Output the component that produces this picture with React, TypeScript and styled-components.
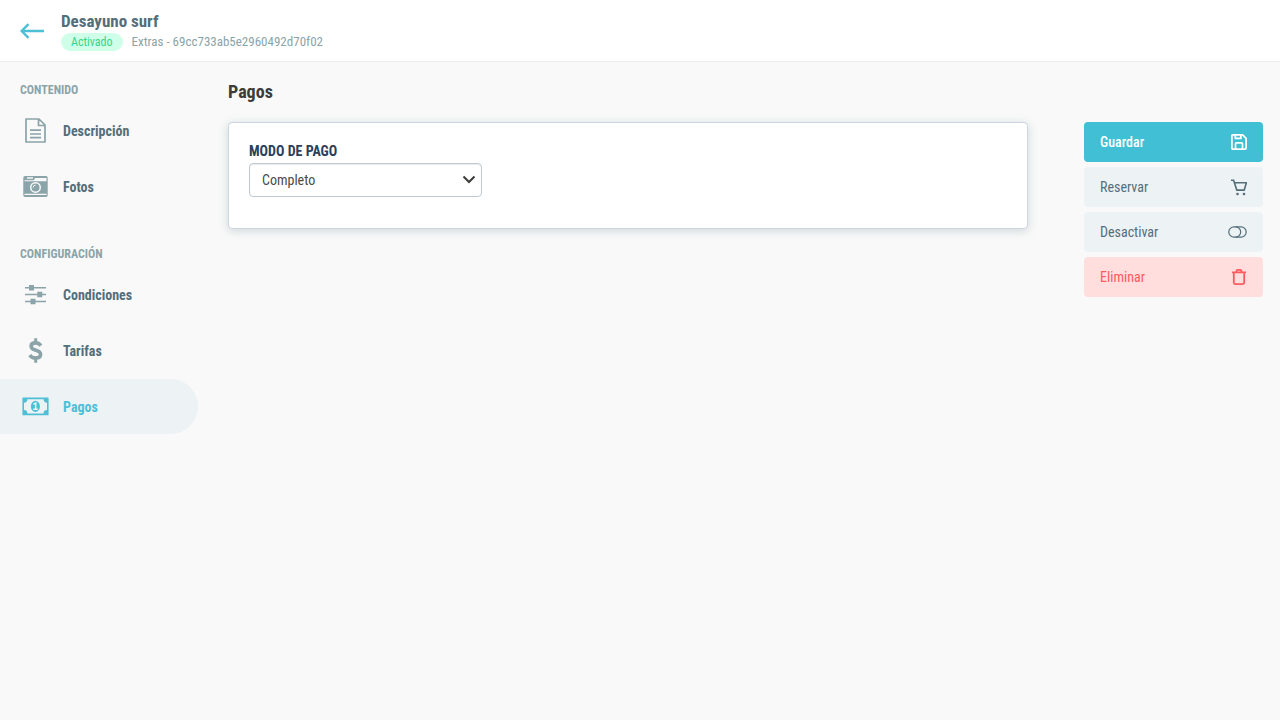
import React from "react";
import styled, { createGlobalStyle, css } from "styled-components";

const GlobalStyle = createGlobalStyle`
  *, *::before, *::after { box-sizing: border-box; }
  body {
    margin: 0;
    background: #f9f9f9;
    color: #3c3c3b;
    font-family: "Roboto Condensed", "Liberation Sans Narrow", Roboto, sans-serif;
    font-size: 14px;
    line-height: 20px;
    -webkit-font-smoothing: antialiased;
  }
  button, select { font: inherit; }
`;

const Header = styled.header`
  display: flex;
  align-items: center;
  gap: 16px;
  height: 62px;
  padding: 0 20px;
  background: #fff;
  border-bottom: 1px solid #eee;
`;

const BackLink = styled.a`
  display: flex;
  color: #4dc0d6;
`;

const ItemName = styled.h1`
  margin: 0;
  padding-bottom: 2px;
  font-size: 17px;
  line-height: 20px;
  color: #546e7a;
`;

const ItemMeta = styled.div`
  display: flex;
  align-items: center;
  gap: 9px;
  font-size: 13px;
  line-height: 18px;
  color: #8ba4a9;
`;

const Badge = styled.span`
  padding: 0 10px;
  border-radius: 9px;
  background: #d0ffe9;
  color: #35d586;
  font-size: 12px;
  line-height: 18px;
`;

const Page = styled.div`
  display: flex;
  align-items: flex-start;
`;

const Sidebar = styled.nav`
  flex: 0 0 198px;
  padding-top: 18px;
`;

const NavSection = styled.section`
  margin-bottom: 30px;
`;

const NavHeading = styled.h2`
  margin: 0 0 3px;
  padding-left: 20px;
  font-size: 12px;
  line-height: 20px;
  color: #8ba4a9;
`;

const NavLink = styled.a<{ $active?: boolean }>`
  display: flex;
  align-items: center;
  gap: 14px;
  height: 55px;
  margin-bottom: 1px;
  padding-left: 22px;
  border-radius: 0 28px 28px 0;
  font-weight: 700;
  text-decoration: none;
  color: #546e7a;
  svg { color: #8ba4a9; }
  ${(p) =>
    p.$active &&
    css`
      background: #edf2f5;
      color: #4dc0d6;
      svg { color: #4dc0d6; }
    `}
`;

const Main = styled.main`
  flex: 1;
  min-width: 0;
  padding: 18px 17px 40px 30px;
`;

const Title = styled.h2`
  margin: 0 0 18px;
  font-size: 18px;
  line-height: 24px;
`;

const Columns = styled.div`
  display: flex;
  align-items: flex-start;
  gap: 56px;
`;

const Card = styled.form`
  flex: 1;
  min-width: 0;
  padding: 18px 20px 31px;
  background: #fff;
  border: 1px solid #cbd6e2;
  border-radius: 4px;
  box-shadow: 0 2px 10px rgba(84, 120, 122, 0.25);
`;

const FieldLabel = styled.label`
  display: block;
  margin-bottom: 2px;
  font-weight: 700;
  text-transform: uppercase;
  color: #2b405a;
`;

const SelectBox = styled.div`
  display: grid;
  align-items: center;
  max-width: 233px;
  > * { grid-area: 1 / 1; }
  svg {
    justify-self: end;
    margin-right: 6px;
    pointer-events: none;
  }
`;

const Select = styled.select`
  appearance: none;
  width: 100%;
  height: 34px;
  padding: 0 32px 0 12px;
  border: 1px solid #bfc9d2;
  border-radius: 4px;
  background: #fff;
  color: #4a4a4a;
  box-shadow: inset 0 1px 1px rgba(0, 0, 0, 0.08);
`;

const Actions = styled.aside`
  display: flex;
  flex-direction: column;
  flex: 0 0 179px;
  gap: 5px;
`;

const tones = {
  primary: css`background: #41bfd5; color: #fff; font-weight: 500;`,
  neutral: css`background: #edf2f5; color: #546e7a;`,
  danger: css`background: #ffdedd; color: #ff5a5f;`,
};

const ActionButton = styled.button<{ $tone: keyof typeof tones }>`
  display: flex;
  align-items: center;
  justify-content: space-between;
  height: 40px;
  padding: 0 16px;
  border: 0;
  border-radius: 4px;
  cursor: pointer;
  ${(p) => tones[p.$tone]}
`;

const BackIcon = () => (
  <svg width="25" height="16" viewBox="0 0 25 16" fill="none" stroke="currentColor" strokeWidth="2.4" aria-hidden>
    <path d="M24 8H2M8.500 1.200L1.700 8l6.800 6.800" />
  </svg>
);

const DocumentIcon = () => (
  <svg width="27" height="27" viewBox="0 0 27 27" fill="none" stroke="currentColor" strokeWidth="1.700" strokeLinejoin="round" aria-hidden>
    <path d="M4 2h13l6 6v17H4zM16.500 2v6.500H23M8 13.200h11M8 17h11M8 20.700h11" />
  </svg>
);

const CameraIcon = () => (
  <svg width="27" height="27" viewBox="0 0 27 27" aria-hidden>
    <path
      fill="currentColor"
      fillRule="evenodd"
      d="M3 3h21a1.700 1.700 0 0 1 1.700 1.700v17.600A1.700 1.700 0 0 1 24 24H3a1.700 1.700 0 0 1-1.700-1.700V4.700A1.700 1.700 0 0 1 3 3zM5 4.200v1.600h6V4.200zM2.500 7.200v1h22V5H13l-1 2.200zM2.500 20.800v1.200h22v-1.200z"
    />
    <circle cx="13.500" cy="14.400" r="5.500" fill="#f9f9f9" />
    <circle cx="13.500" cy="14.400" r="4" fill="currentColor" />
    <path d="M11.200 14.600a2.400 2.400 0 0 1 2.300-2.500" fill="none" stroke="#f9f9f9" />
  </svg>
);

const SlidersIcon = () => (
  <svg width="27" height="27" viewBox="0 0 27 27" fill="currentColor" aria-hidden>
    <path d="M3 6h21v1.500H3zM3 12.800h21v1.500H3zM3 19.700h21v1.500H3z" />
    <path d="M7 4h5v5.500H7zM15.300 10.800h5v5.500h-5zM8.500 17.700h5v5.500h-5z" />
  </svg>
);

const DollarIcon = () => (
  <svg width="27" height="27" viewBox="0 0 27 27" fill="none" stroke="currentColor" strokeWidth="3.600" aria-hidden>
    <path d="M18.900 8.600C17.400 6.700 15.800 5.900 13.600 5.900c-2.800 0-4.500 1.300-4.500 3.300 0 5.200 9.500 3 9.500 8.100 0 2.300-2 3.700-5 3.700-2.500 0-4.500-1-5.900-2.900" />
    <path d="M13.700 1.200v4M13.700 21.500v4.200" strokeWidth="3" />
  </svg>
);

const BanknoteIcon = () => (
  <svg width="27" height="27" viewBox="0 0 27 27" aria-hidden>
    <path
      fill="currentColor"
      fillRule="evenodd"
      d="M1 4.500h25a.6.6 0 0 1 .6.6v16.600a.6.6 0 0 1-.6.600H1a.6.6 0 0 1-.6-.6V5.100A.6.600 0 0 1 1 4.500zM5.400 6.300a3.400 3.400 0 0 1-3.400 3.400v7.400a3.400 3.400 0 0 1 3.400 3.400h16.200a3.400 3.400 0 0 1 3.400-3.400V9.700a3.400 3.400 0 0 1-3.400-3.400z"
    />
    <ellipse cx="13.400" cy="13.400" rx="4.500" ry="5.600" fill="currentColor" />
    <path d="M11.500 11.400l2.200-1.300v6M11.300 16.300h4.500" fill="none" stroke="#edf2f5" strokeWidth="1.500" />
  </svg>
);

const ChevronIcon = () => (
  <svg width="14" height="10" viewBox="0 0 14 10" fill="none" stroke="#3c3c3b" strokeWidth="2" aria-hidden>
    <path d="M1.500 1.500L7 7l5.500-5.500" />
  </svg>
);

const SaveIcon = () => (
  <svg width="16" height="16" viewBox="0 0 16 16" fill="none" stroke="currentColor" strokeWidth="1.700" strokeLinejoin="round" aria-hidden>
    <path d="M2 .9h9.700l3.400 3.400v9.800a1 1 0 0 1-1 1H1.900a1 1 0 0 1-1-1V2A1 1 0 0 1 2 .9z" />
    <path d="M4.300 1v3.400h5.600V1M4.500 15V9.900a1 1 0 0 1 1-1h5a1 1 0 0 1 1 1V15" />
  </svg>
);

const CartIcon = () => (
  <svg width="17" height="17" viewBox="0 0 17 17" fill="none" stroke="currentColor" strokeWidth="1.600" aria-hidden>
    <path d="M1 1.200h2.600l3.200 9.900h7.400l2.200-7.300H4.500" />
    <g fill="currentColor" stroke="none">
      <circle cx="7.500" cy="15" r="1.300" />
      <circle cx="14" cy="15" r="1.300" />
    </g>
  </svg>
);

const ToggleIcon = () => (
  <svg width="19" height="12" viewBox="0 0 19 12" fill="none" stroke="currentColor" strokeWidth="1.200" aria-hidden>
    <rect x="0.800" y="0.800" width="17.400" height="10.400" rx="5.200" />
    <path d="M7.500 .8a5.200 5.200 0 0 1 0 10.400" />
  </svg>
);

const TrashIcon = () => (
  <svg width="16" height="16" viewBox="0 0 16 16" fill="none" stroke="currentColor" strokeWidth="1.800" strokeLinejoin="round" aria-hidden>
    <path d="M1 3.400h14M2.800 3.400v10.200a1.500 1.500 0 0 0 1.500 1.500h7.400a1.500 1.500 0 0 0 1.500-1.500V3.400M5.500 3.400V2.300A1.400 1.400 0 0 1 6.900.9h2.200a1.400 1.400 0 0 1 1.400 1.400v1.100" />
  </svg>
);

export default function App() {
  return (
    <>
      <GlobalStyle />
      <Header>
        <BackLink href="#extras" aria-label="Volver">
          <BackIcon />
        </BackLink>
        <div>
          <ItemName>Desayuno surf</ItemName>
          <ItemMeta>
            <Badge>Activado</Badge>
            <span>Extras - 69cc733ab5e2960492d70f02</span>
          </ItemMeta>
        </div>
      </Header>
      <Page>
        <Sidebar>
          <NavSection>
            <NavHeading>CONTENIDO</NavHeading>
            <NavLink href="#descripcion"><DocumentIcon />Descripción</NavLink>
            <NavLink href="#fotos"><CameraIcon />Fotos</NavLink>
          </NavSection>
          <NavSection>
            <NavHeading>CONFIGURACIÓN</NavHeading>
            <NavLink href="#condiciones"><SlidersIcon />Condiciones</NavLink>
            <NavLink href="#tarifas"><DollarIcon />Tarifas</NavLink>
            <NavLink href="#pagos" $active aria-current="page"><BanknoteIcon />Pagos</NavLink>
          </NavSection>
        </Sidebar>
        <Main>
          <Title>Pagos</Title>
          <Columns>
            <Card>
              <FieldLabel htmlFor="modo">Modo de pago</FieldLabel>
              <SelectBox>
                <Select id="modo" defaultValue="Completo">
                  <option>Completo</option>
                </Select>
                <ChevronIcon />
              </SelectBox>
            </Card>
            <Actions>
              <ActionButton type="button" $tone="primary">Guardar<SaveIcon /></ActionButton>
              <ActionButton type="button" $tone="neutral">Reservar<CartIcon /></ActionButton>
              <ActionButton type="button" $tone="neutral">Desactivar<ToggleIcon /></ActionButton>
              <ActionButton type="button" $tone="danger">Eliminar<TrashIcon /></ActionButton>
            </Actions>
          </Columns>
        </Main>
      </Page>
    </>
  );
}
